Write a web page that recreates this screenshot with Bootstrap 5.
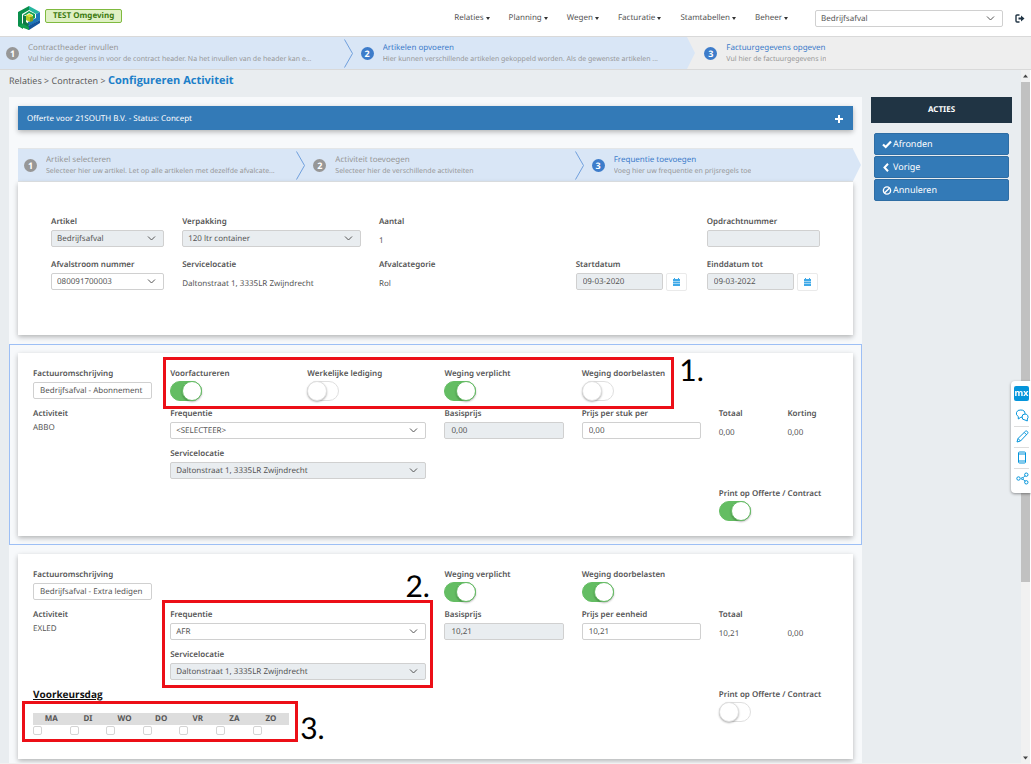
<!DOCTYPE html>
<html lang="nl">
<head>
<meta charset="utf-8">
<meta name="viewport" content="width=device-width, initial-scale=1">
<title>Configureren Activiteit</title>
<link href="https://cdn.jsdelivr.net/npm/bootstrap@5.3.0/dist/css/bootstrap.min.css" rel="stylesheet">
<style>
  :root { --ink:#555; --blue:#337ab7; --sky:#d9e6f6; --ground:#e9edf0; --line:#d0d0d0; }
  body { font-family:"Noto Sans","Open Sans",sans-serif; font-size:8px; line-height:12px; color:var(--ink); background:#fff; text-rendering:geometricPrecision; }
  input, select, button { text-rendering:inherit; }
  svg { display:block; flex:none; }
  /* top bar */
  .topbar { height:36px; }
  .env-tag { border:1px solid #7fba3f; background:#dff0c4; color:#3c7a10; border-radius:2px; font-weight:700; padding:0 7px; line-height:12px; margin-top:-4px; }
  .menu-link { color:var(--ink); text-decoration:none; padding:0 9px 0 10px; display:flex; align-items:center; gap:2px; }
  .menu-link::after { content:""; border:2px solid transparent; border-top:3px solid #333; border-bottom:0; }
  .org-box { width:188px; margin-left:18px; }
  .exit-btn { margin-left:12px; margin-right:6px; }
  .bare { border:0; background:none; padding:0; color:#203444; }
  /* steps */
  .steps { height:34px; background:#eee; border:1px solid #d9d9d9; border-width:1px 0; }
  .steps-inner { border-color:#e3e6e8; }
  .step { flex:none; width:33.3333%; position:relative; display:flex; align-items:center; padding-left:17px; padding-right:12px; gap:9px; background:var(--sky); }
  .step:first-child { padding-left:6px; }
  .step.todo { background:#eee; }
  .step > svg.chev { position:absolute; left:0; top:2px; }
  .step > svg.tip { position:absolute; left:0; top:0; }
  .step > svg.tip-end { position:absolute; left:100%; top:0; }
  .dot { width:13px; height:13px; border-radius:50%; background:#979797; color:#fff; font-weight:700; font-size:9px; line-height:13px; text-align:center; flex:none; }
  .dot.on { background:#3d7cca; }
  .step-name { color:#979797; line-height:13px; }
  .step-name.on { color:#3d7cca; }
  .step-note { color:#979797; font-size:7px; line-height:11px; }
  /* body area */
  .work { background:var(--ground); border-bottom:1px solid #f1f1f1; }
  .crumbs { height:27px; padding:5px 9px 0; font-family:"Open Sans",sans-serif; font-size:9px; }
  .crumbs a { color:var(--ink); text-decoration:none; }
  .crumbs strong { font-size:11px; color:#1c7fc9; }
  .columns { padding:0 9px; gap:9px; }
  .sheet { background:#f7f9fb; padding:8px; border:1px solid transparent; }
  .sheet.chosen { border-color:#9dbff5; }
  .panel { background:#fff; box-shadow:0 2px 5px rgba(0,0,0,.28); position:relative; }
  .offer-bar { background:var(--blue); color:#fff; height:24px; padding:1px 9px 0; box-shadow:0 2px 5px rgba(0,0,0,.28); margin-bottom:18px; }
  .wide-form { padding:34px 24px 1px; min-height:153px; }
  .line-form { padding:15px 6px 8px; }
  .row.grid18 { --bs-gutter-x:18px; margin:0; }
  .wide-form .grid18 { min-height:43px; }
  .line-form .grid18 { min-height:40px; }
  .cap { display:block; font-weight:600; line-height:12px; margin-bottom:2px; white-space:nowrap; }
  .out { display:block; line-height:12px; white-space:nowrap; }
  .out.low { margin-top:7px; }
  .form-control.fld, .form-select.fld { font-size:8px; line-height:15px; height:17px; min-height:0; padding:0 6px; border:1px solid var(--line); border-radius:2px; color:var(--ink); background-color:#fff; }
  .form-select.fld { padding:0 18px 0 5px; background-size:9px 9px; background-position:right 7px center;
    background-image:url("data:image/svg+xml,%3csvg xmlns='http://www.w3.org/2000/svg' viewBox='0 0 9 9'%3e%3cpath fill='none' stroke='%23555' d='M1 2.5 4.5 6 8 2.5'/%3e%3c/svg%3e"); }
  .fld:disabled { background-color:var(--ground) !important; opacity:1; }
  .date-pair { gap:3px; padding-right:2px; }
  .cal-btn { width:21px; height:18px; border:1px solid #eaeaea; border-radius:2px; background:#fff; padding:0; flex:none; display:grid; place-items:center; }
  .switcher { appearance:none; display:block; width:32px; height:20px; border-radius:10px; background:#fff; border:1px solid #dfdfdf; margin:-1px 0 0; position:relative; }
  .switcher::before { content:""; position:absolute; left:-1px; top:-1px; width:20px; height:20px; border-radius:50%; background:#fff; border:1px solid #dfdfdf; box-shadow:0 1px 2px rgba(0,0,0,.3); }
  .switcher:checked { background:#64bd63; border-color:#64bd63; }
  .switcher:checked::before { left:auto; right:-1px; border-color:#64bd63; }
  .day-title { font-family:"Open Sans",sans-serif; font-size:10px; font-weight:700; color:#111; text-decoration:underline; line-height:12px; margin:-1px 0 13px; }
  .days { width:100%; table-layout:fixed; }
  .days th { background:#ddd; text-align:center; font-weight:700; padding:0; line-height:12px; }
  .days td { padding:1px 0 0; line-height:0; }
  .days input { appearance:none; width:9px; height:9px; border:1px solid #d4d4d4; border-radius:2px; margin:0; background:#fff; }
  /* annotations drawn over the form */
  .mark-box { position:absolute; border:3px solid #ec0f17; pointer-events:none; z-index:2; }
  .mark-no { position:absolute; font-family:Lato,sans-serif; font-weight:400; font-size:30px; line-height:30px; color:#000; z-index:2; }
  .m1 { left:17.4%; width:61.2%; top:4px; height:52px; }
  .n1 { left:79.2%; top:2px; }
  .m2 { left:17.3%; width:32.4%; top:46px; height:88px; }
  .n2 { left:46.4%; top:17px; }
  .m3 { left:.5%; width:33%; top:147px; height:41px; }
  .n3 { left:33.8%; top:159px; }
  /* right side */
  .side { width:141px; flex:none; }
  .side-head { background:#203444; color:#fff; font-size:8px; font-weight:700; line-height:26px; text-align:center; margin:0 0 10px; }
  .actions { gap:1px; }
  .side .btn { --bs-btn-font-size:9px; --bs-btn-padding-x:7px; --bs-btn-padding-y:0; --bs-btn-border-radius:2px; --bs-btn-bg:#337ab7; --bs-btn-border-color:#2e6da4; --bs-btn-color:#fff; height:22px; margin:0 3px; display:flex; align-items:center; gap:1px; }
  .rail { width:9px; margin-right:1px; background:#f1f1f1; flex:none; }
  .rail-thumb { background:#c1c1c1; height:72%; }
  .dock { position:fixed; right:0; top:381px; width:20px; background:#fff; border-radius:4px 0 0 4px; box-shadow:0 1px 3px rgba(0,0,0,.4); padding:5px 2px 4px 3px; z-index:5; }
  .dock-logo { width:15px; height:15px; background:#0595db; color:#fff; border-radius:2px; font-size:9px; font-weight:700; line-height:13px; text-align:center; margin-bottom:5px; }
  .dock button { display:block; width:100%; padding:3px 0 4px 2px; border-bottom:1px solid #ddd; }
  .dock button:last-child { border:0; }
</style>
</head>
<body class="vh-100 d-flex flex-column overflow-hidden">

<header class="topbar d-flex align-items-center flex-shrink-0">
  <svg class="ms-3 me-1" width="25" height="26" viewBox="0 0 25 26" aria-label="Logo">
    <path fill="#0a8f4c" d="M13 1 2 7v14l5 3v-5l-1-1V9l7-4z"/>
    <path fill="#27b6a0" d="m13 1 11 6-4 2-7-4z"/>
    <path fill="#1b78b8" d="M24 7v8l-7 4-5 2v-4l8-4V9z"/>
    <path fill="#15559b" d="M7 21v-3l5 3 12-6v3l-11 7z"/>
    <path fill="#12a04f" d="m7 10 6-4 6 3v4l-2 1v-4l-4-2-3 2z"/>
    <path fill="#0f7a45" d="m7 10 3 1v6l3 2-1 3-5-3z"/>
    <path fill="#12a04f" d="m2 21 5-2 6 3v3z"/>
    <path fill="#d8de2a" d="m10 10 4-1 3 2-3 1z"/>
    <path fill="#b5cb25" d="m10 10 4 2v5l-4-2z"/>
    <path fill="#7da01c" d="m14 12 3-1v5l-3 1z"/>
  </svg>
  <span class="env-tag">TEST Omgeving</span>
  <nav class="ms-auto d-flex">
    <a class="menu-link" href="#">Relaties</a>
    <a class="menu-link" href="#">Planning</a>
    <a class="menu-link" href="#">Wegen</a>
    <a class="menu-link" href="#">Facturatie</a>
    <a class="menu-link" href="#">Stamtabellen</a>
    <a class="menu-link" href="#">Beheer</a>
  </nav>
  <select class="form-select fld org-box" aria-label="Afvalsoort"><option>Bedrijfsafval</option></select>
  <button class="bare exit-btn" aria-label="Uitloggen">
    <svg width="10" height="9" viewBox="0 0 10 9"><path fill="none" stroke="#203444" stroke-width="1.4" d="M4.5 1H2Q1 1 1 2v5q0 1 1 1h2.500"/><path fill="#203444" d="M3.500 3.500H6V1.500l3.500 3L6 7.500v-2H3.500z"/></svg>
  </button>
</header>

<div class="steps d-flex flex-shrink-0">
  <div class="step"><span class="dot">1</span>
    <div class="text-truncate"><div class="step-name">Contractheader invullen</div><div class="step-note text-truncate">Vul hier de gegevens in voor de contract header. Na het invullen van de header kan e...</div></div></div>
  <div class="step"><svg class="chev" width="9" height="29" viewBox="0 0 9 29"><path fill="none" stroke="#6f9fdc" d="m.5.500 8 14-8 14"/></svg><span class="dot on">2</span>
    <div class="text-truncate"><div class="step-name on">Artikelen opvoeren</div><div class="step-note text-truncate">Hier kunnen verschillende artikelen gekoppeld worden. Als de gewenste artikelen ...</div></div></div>
  <div class="step todo"><svg class="tip" width="8" height="32" viewBox="0 0 8 32"><path fill="#d9e6f6" d="m0 0 8 16-8 16z"/></svg><span class="dot on">3</span>
    <div class="text-truncate"><div class="step-name on">Factuurgegevens opgeven</div><div class="step-note text-truncate">Vul hier de factuurgegevens in</div></div></div>
</div>

<div class="d-flex flex-grow-1 overflow-hidden">
  <main class="work flex-grow-1 overflow-hidden">
    <div class="crumbs"><a href="#">Relaties</a> &gt; <a href="#">Contracten</a> &gt; <strong>Configureren Activiteit</strong></div>
    <div class="columns d-flex">
      <div class="flex-grow-1">

        <section class="sheet">
          <div class="offer-bar d-flex align-items-center justify-content-between">
            <span>Offerte voor 21SOUTH B.V. - Status: Concept</span>
            <button class="bare" aria-label="Uitklappen"><svg width="10" height="10" viewBox="0 0 10 10"><path stroke="#fff" stroke-width="2" d="M5 1v8M1 5h8"/></svg></button>
          </div>
          <div class="steps steps-inner d-flex">
            <div class="step"><span class="dot">1</span>
              <div class="text-truncate"><div class="step-name">Artikel selecteren</div><div class="step-note text-truncate">Selecteer hier uw artikel. Let op alle artikelen met dezelfde afvalcate...</div></div></div>
            <div class="step"><svg class="chev" width="9" height="29" viewBox="0 0 9 29"><path fill="none" stroke="#6f9fdc" d="m.5.500 8 14-8 14"/></svg><span class="dot">2</span>
              <div class="text-truncate"><div class="step-name">Activiteit toevoegen</div><div class="step-note text-truncate">Selecteer hier de verschillende activiteiten</div></div></div>
            <div class="step"><svg class="chev" width="9" height="29" viewBox="0 0 9 29"><path fill="none" stroke="#6f9fdc" d="m.5.500 8 14-8 14"/></svg><span class="dot on">3</span>
              <div class="text-truncate"><div class="step-name on">Frequentie toevoegen</div><div class="step-note text-truncate">Voeg hier uw frequentie en prijsregels toe</div></div>
              <svg class="tip-end" width="8" height="32" viewBox="0 0 8 32"><path fill="#d9e6f6" d="m0 0 8 16-8 16z"/></svg></div>
          </div>
          <div class="panel wide-form">
            <div class="row grid18">
              <div class="col-2"><label class="cap" for="artikel">Artikel</label><select id="artikel" class="form-select fld" disabled><option>Bedrijfsafval</option></select></div>
              <div class="col-3"><label class="cap" for="verp">Verpakking</label><select id="verp" class="form-select fld" disabled><option>120 ltr container</option></select></div>
              <div class="col-3"><span class="cap">Aantal</span><span class="out low">1</span></div>
              <div class="col-2 offset-2"><label class="cap" for="opdr">Opdrachtnummer</label><input id="opdr" class="form-control fld" disabled></div>
            </div>
            <div class="row grid18">
              <div class="col-2"><label class="cap" for="stroom">Afvalstroom nummer</label><select id="stroom" class="form-select fld"><option>080091700003</option></select></div>
              <div class="col-3"><span class="cap">Servicelocatie</span><span class="out low">Daltonstraat 1, 3335LR Zwijndrecht</span></div>
              <div class="col-3"><span class="cap">Afvalcategorie</span><span class="out low">Rol</span></div>
              <div class="col-2"><label class="cap" for="start">Startdatum</label>
                <div class="d-flex date-pair"><input id="start" class="form-control fld" value="09-03-2020" disabled><button class="cal-btn" aria-label="Kies startdatum"><svg width="7" height="8" viewBox="0 0 7 8"><path fill="#3fa9e8" d="M0 1h1V0h1v1h3V0h1v1h1v2H0zm0 2.500h7v2H0zM0 6h7v2H0z"/></svg></button></div></div>
              <div class="col-2"><label class="cap" for="eind">Einddatum tot</label>
                <div class="d-flex date-pair"><input id="eind" class="form-control fld" value="09-03-2022" disabled><button class="cal-btn" aria-label="Kies einddatum"><svg width="7" height="8" viewBox="0 0 7 8"><path fill="#3fa9e8" d="M0 1h1V0h1v1h3V0h1v1h1v2H0zm0 2.500h7v2H0zM0 6h7v2H0z"/></svg></button></div></div>
            </div>
          </div>
        </section>

        <section class="sheet chosen">
          <div class="panel line-form">
            <div class="row grid18">
              <div class="col-2"><label class="cap" for="o1">Factuuromschrijving</label><input id="o1" class="form-control fld" value="Bedrijfsafval - Abonnement"></div>
              <div class="col-2"><label class="cap" for="t1">Voorfactureren</label><input id="t1" type="checkbox" role="switch" class="switcher" checked></div>
              <div class="col-2"><label class="cap" for="t2">Werkelijke lediging</label><input id="t2" type="checkbox" role="switch" class="switcher"></div>
              <div class="col-2"><label class="cap" for="t3">Weging verplicht</label><input id="t3" type="checkbox" role="switch" class="switcher" checked></div>
              <div class="col-2"><label class="cap" for="t4">Weging doorbelasten</label><input id="t4" type="checkbox" role="switch" class="switcher"></div>
            </div>
            <div class="row grid18">
              <div class="col-2"><span class="cap">Activiteit</span><span class="out">ABBO</span></div>
              <div class="col-4"><label class="cap" for="f1">Frequentie</label><select id="f1" class="form-select fld"><option>&lt;SELECTEER&gt;</option></select></div>
              <div class="col-2"><label class="cap" for="b1">Basisprijs</label><input id="b1" class="form-control fld" value="0,00" disabled></div>
              <div class="col-2"><label class="cap" for="p1">Prijs per stuk per</label><input id="p1" class="form-control fld" value="0,00"></div>
              <div class="col-1"><span class="cap">Totaal</span><span class="out low">0,00</span></div>
              <div class="col-1"><span class="cap">Korting</span><span class="out low">0,00</span></div>
            </div>
            <div class="row grid18">
              <div class="col-4 offset-2"><label class="cap" for="s1">Servicelocatie</label><select id="s1" class="form-select fld" disabled><option>Daltonstraat 1, 3335LR Zwijndrecht</option></select></div>
            </div>
            <div class="row grid18">
              <div class="col-2 offset-10"><label class="cap" for="c1">Print op Offerte / Contract</label><input id="c1" type="checkbox" role="switch" class="switcher" checked></div>
            </div>
            <div class="mark-box m1"></div><div class="mark-no n1">1.</div>
          </div>
        </section>

        <section class="sheet">
          <div class="panel line-form">
            <div class="row grid18">
              <div class="col-2"><label class="cap" for="o2">Factuuromschrijving</label><input id="o2" class="form-control fld" value="Bedrijfsafval - Extra ledigen"></div>
              <div class="col-2 offset-4"><label class="cap" for="t5">Weging verplicht</label><input id="t5" type="checkbox" role="switch" class="switcher" checked></div>
              <div class="col-2"><label class="cap" for="t6">Weging doorbelasten</label><input id="t6" type="checkbox" role="switch" class="switcher" checked></div>
            </div>
            <div class="row grid18">
              <div class="col-2"><span class="cap">Activiteit</span><span class="out">EXLED</span></div>
              <div class="col-4"><label class="cap" for="f2">Frequentie</label><select id="f2" class="form-select fld"><option>AFR</option></select></div>
              <div class="col-2"><label class="cap" for="b2">Basisprijs</label><input id="b2" class="form-control fld" value="10,21" disabled></div>
              <div class="col-2"><label class="cap" for="p2">Prijs per eenheid</label><input id="p2" class="form-control fld" value="10,21"></div>
              <div class="col-1"><span class="cap">Totaal</span><span class="out low">10,21</span></div>
              <div class="col-1"><span class="cap">&nbsp;</span><span class="out low">0,00</span></div>
            </div>
            <div class="row grid18">
              <div class="col-4 offset-2"><label class="cap" for="s2">Servicelocatie</label><select id="s2" class="form-select fld" disabled><option>Daltonstraat 1, 3335LR Zwijndrecht</option></select></div>
            </div>
            <div class="row grid18 pb-3">
              <div class="col-4">
                <h2 class="day-title">Voorkeursdag</h2>
                <table class="days">
                  <thead><tr><th>MA</th><th>DI</th><th>WO</th><th>DO</th><th>VR</th><th>ZA</th><th>ZO</th></tr></thead>
                  <tbody><tr><td><input type="checkbox" aria-label="MA"></td><td><input type="checkbox" aria-label="DI"></td><td><input type="checkbox" aria-label="WO"></td><td><input type="checkbox" aria-label="DO"></td><td><input type="checkbox" aria-label="VR"></td><td><input type="checkbox" aria-label="ZA"></td><td><input type="checkbox" aria-label="ZO"></td></tr></tbody>
                </table>
              </div>
              <div class="col-2 offset-6"><label class="cap" for="c2">Print op Offerte / Contract</label><input id="c2" type="checkbox" role="switch" class="switcher"></div>
            </div>
            <div class="mark-box m2"></div><div class="mark-no n2">2.</div>
            <div class="mark-box m3"></div><div class="mark-no n3">3.</div>
          </div>
        </section>
      </div>

      <aside class="side">
        <h2 class="side-head">ACTIES</h2>
        <div class="d-grid actions">
          <button class="btn"><svg width="10" height="9" viewBox="0 0 10 9"><path fill="none" stroke="#fff" stroke-width="2.200" d="m1 4.500 2.700 2.500L9 1.500"/></svg>Afronden</button>
          <button class="btn"><svg width="10" height="9" viewBox="0 0 10 9"><path fill="none" stroke="#fff" stroke-width="2" d="M6 .8 2.500 4.500 6 8.200"/></svg>Vorige</button>
          <button class="btn"><svg width="10" height="9" viewBox="0 0 10 9"><g fill="none" stroke="#fff" stroke-width="1.400"><circle cx="5" cy="4.500" r="3.600"/><path d="M2.400 7 7.600 2"/></g></svg>Annuleren</button>
        </div>
      </aside>
    </div>
  </main>
  <div class="rail d-flex flex-column" aria-hidden="true">
    <svg width="9" height="12" viewBox="0 0 9 12"><path fill="#444" d="M2 7.500h5L4.500 4.500z"/></svg>
    <div class="rail-thumb"></div>
    <svg class="mt-auto" width="9" height="12" viewBox="0 0 9 12"><path fill="#444" d="M2 4.500h5L4.500 7.500z"/></svg>
  </div>
</div>

<aside class="dock">
  <div class="dock-logo">mx</div>
  <button class="bare" aria-label="Feedback"><svg width="13" height="13" viewBox="0 0 13 13"><g fill="#fff" stroke="#0595db"><path d="M4.800 1a4 3.500 0 1 1 0 7.300L2.300 10V7.500A4 3.500 0 0 1 4.800 1z"/><path d="M9 5a3 3 0 0 1 2.300 5v2L9 11a3 3 0 1 1 0-6z"/></g></svg></button>
  <button class="bare" aria-label="Bewerken"><svg width="13" height="13" viewBox="0 0 13 13"><path fill="none" stroke="#0595db" d="m1 12 1-3.500L9.500 1.200q1-.6 1.900.3t.3 1.900L4.500 11zM8.300 2.500l2.300 2.300M2 8.500 4.500 11"/></svg></button>
  <button class="bare" aria-label="Mobiel"><svg width="13" height="13" viewBox="0 0 13 13"><path fill="none" stroke="#0595db" d="M3.500 1h5q1 0 1 1v9q0 1-1 1h-5q-1 0-1-1V2q0-1 1-1zM2.500 3h7M2.500 10h7"/></svg></button>
  <button class="bare" aria-label="Delen"><svg width="13" height="13" viewBox="0 0 13 13"><g fill="none" stroke="#0595db"><circle cx="2.500" cy="6.500" r="1.700"/><circle cx="6.300" cy="6.500" r="1"/><circle cx="10.300" cy="2.700" r="1.700"/><circle cx="10.300" cy="10.300" r="1.700"/><path d="m7 5.800 2-2M7 7.200l2 2"/></g></svg></button>
</aside>

<script src="https://cdn.jsdelivr.net/npm/bootstrap@5.3.0/dist/js/bootstrap.bundle.min.js"></script>
</body>
</html>
